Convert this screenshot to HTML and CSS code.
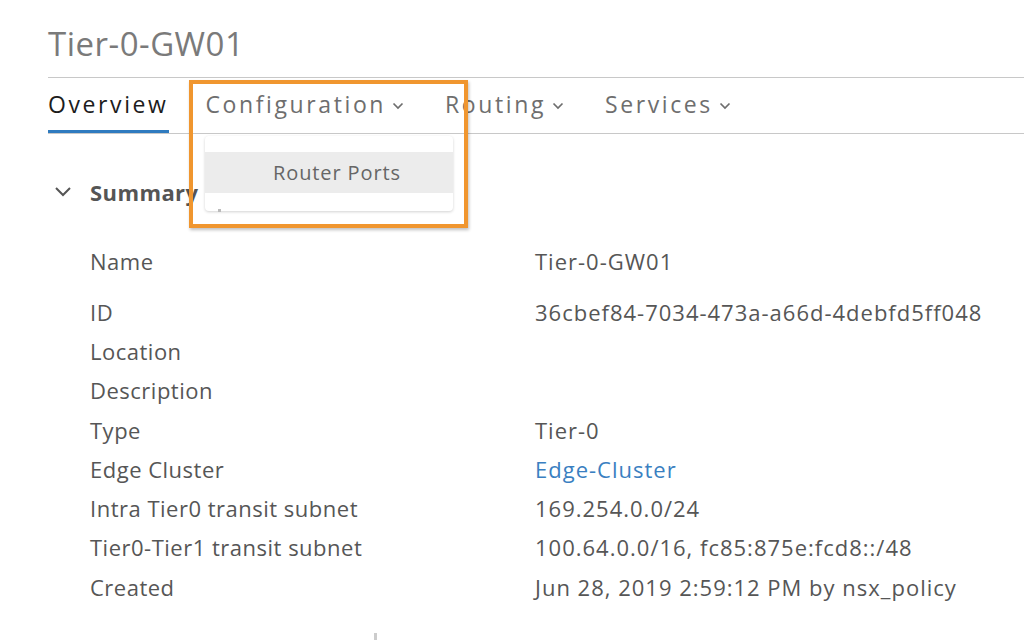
FILE: index.html
```html
<!DOCTYPE html>
<html>
<head>
<meta charset="utf-8">
<link rel="stylesheet" href="styles.css">
</head>
<body>
<div class="page">
  <h1 class="title">Tier-0-GW01</h1>
  <nav class="tabs">
    <div class="tab active">Overview</div>
    <div class="tab">Configuration <svg class="caret" width="12" height="8" viewBox="0 0 12 8"><path d="M1.5 1.5 L6 6 L10.5 1.5" fill="none" stroke="#6e6e6e" stroke-width="1.7"/></svg></div>
    <div class="tab">Routing <svg class="caret" width="12" height="8" viewBox="0 0 12 8"><path d="M1.5 1.5 L6 6 L10.5 1.5" fill="none" stroke="#6e6e6e" stroke-width="1.7"/></svg></div>
    <div class="tab">Services <svg class="caret" width="12" height="8" viewBox="0 0 12 8"><path d="M1.5 1.5 L6 6 L10.5 1.5" fill="none" stroke="#6e6e6e" stroke-width="1.7"/></svg></div>
  </nav>
  <section class="summary">
    <div class="summary-head">
      <svg class="chev" width="18" height="12" viewBox="0 0 18 12"><path d="M2 2 L9 9 L16 2" fill="none" stroke="#555" stroke-width="2"/></svg>
      <span>Summary</span>
    </div>
    <div class="rows">
      <div class="row first"><div class="k">Name</div><div class="v">Tier-0-GW01</div></div>
      <div class="row id"><div class="k">ID</div><div class="v">36cbef84-7034-473a-a66d-4debfd5ff048</div></div>
      <div class="row"><div class="k">Location</div><div class="v"></div></div>
      <div class="row"><div class="k">Description</div><div class="v"></div></div>
      <div class="row"><div class="k">Type</div><div class="v">Tier-0</div></div>
      <div class="row"><div class="k">Edge Cluster</div><div class="v link">Edge-Cluster</div></div>
      <div class="row"><div class="k">Intra Tier0 transit subnet</div><div class="v">169.254.0.0/24</div></div>
      <div class="row"><div class="k">Tier0-Tier1 transit subnet</div><div class="v">100.64.0.0/16, fc85:875e:fcd8::/48</div></div>
      <div class="row"><div class="k">Created</div><div class="v">Jun 28, 2019 2:59:12 PM by nsx_policy</div></div>
    </div>
  </section>
  <div class="menu">
    <div class="menu-item">Router Ports</div>
  </div>
  <div class="highlight"></div>
  <div class="dot"></div>
  <div class="tick"></div>
</div>
</body>
</html>
```
FILE: styles.css
```css
html, body {
  margin: 0;
  padding: 0;
  background: #fff;
}
body {
  font-family: "Open Sans", "Lato", sans-serif;
  color: #565656;
}
.page {
  position: relative;
  width: 1024px;
  height: 640px;
  overflow: hidden;
}
.title {
  margin: 0 0 0 48px;
  padding: 22px 0 0 0;
  height: 55px;
  font-size: 33px;
  font-weight: 400;
  letter-spacing: 0.5px;
  color: #7a7a7a;
  line-height: 44px;
  border-bottom: 1px solid #c8c8c8;
}
.tabs {
  display: flex;
  margin-left: 48px;
  height: 55px;
  border-bottom: 1px solid #c8c8c8;
}
.tab {
  font-size: 23px;
  letter-spacing: 2.6px;
  color: #6e6e6e;
  height: 52px;
  display: flex;
  align-items: center;
  gap: 6px;
  margin-right: 41px;
}
.tab.active {
  color: #1c1c1c;
  border-bottom: 3px solid #2f7bbf;
  margin-right: 37px;
}
.caret {
  display: block;
  margin-top: 4px;
}
.summary {
  padding: 42px 0 0 54px;
}
.summary-head {
  display: flex;
  align-items: center;
  gap: 18px;
  height: 32px;
  font-size: 22px;
  font-weight: 700;
  letter-spacing: 0.4px;
  color: #555;
}
.rows {
  margin-top: 33px;
  padding-left: 36px;
}
.row {
  display: flex;
  height: 39.3px;
  align-items: center;
  font-size: 22px;
  letter-spacing: 1px;
  color: #565656;
}
.row.first {
  margin-bottom: 11.7px;
}
.k {
  width: 445px;
  letter-spacing: 0.5px;
}
.v.link {
  color: #3a7fc1;
}
.menu {
  position: absolute;
  left: 205px;
  top: 136px;
  width: 248px;
  height: 75px;
  background: #fff;
  border-radius: 4px;
  box-shadow: 0 1px 3px rgba(0,0,0,0.18);
  padding-top: 16px;
  box-sizing: border-box;
}
.menu-item {
  height: 41px;
  background: #ececec;
  text-align: center;
  line-height: 41px;
  font-size: 20px;
  letter-spacing: 0.9px;
  color: #666;
  padding-left: 16px;
}
.highlight {
  position: absolute;
  left: 189px;
  top: 80px;
  width: 271px;
  height: 140px;
  border: 4px solid #f0962f;
  box-shadow: 1px 2px 3px rgba(0,0,0,0.25);
}
.dot {
  position: absolute;
  left: 218px;
  top: 209px;
  width: 3px;
  height: 3px;
  background: #bbb;
}
.tick {
  position: absolute;
  left: 374px;
  top: 633px;
  width: 3px;
  height: 7px;
  background: #ccc;
}
```
